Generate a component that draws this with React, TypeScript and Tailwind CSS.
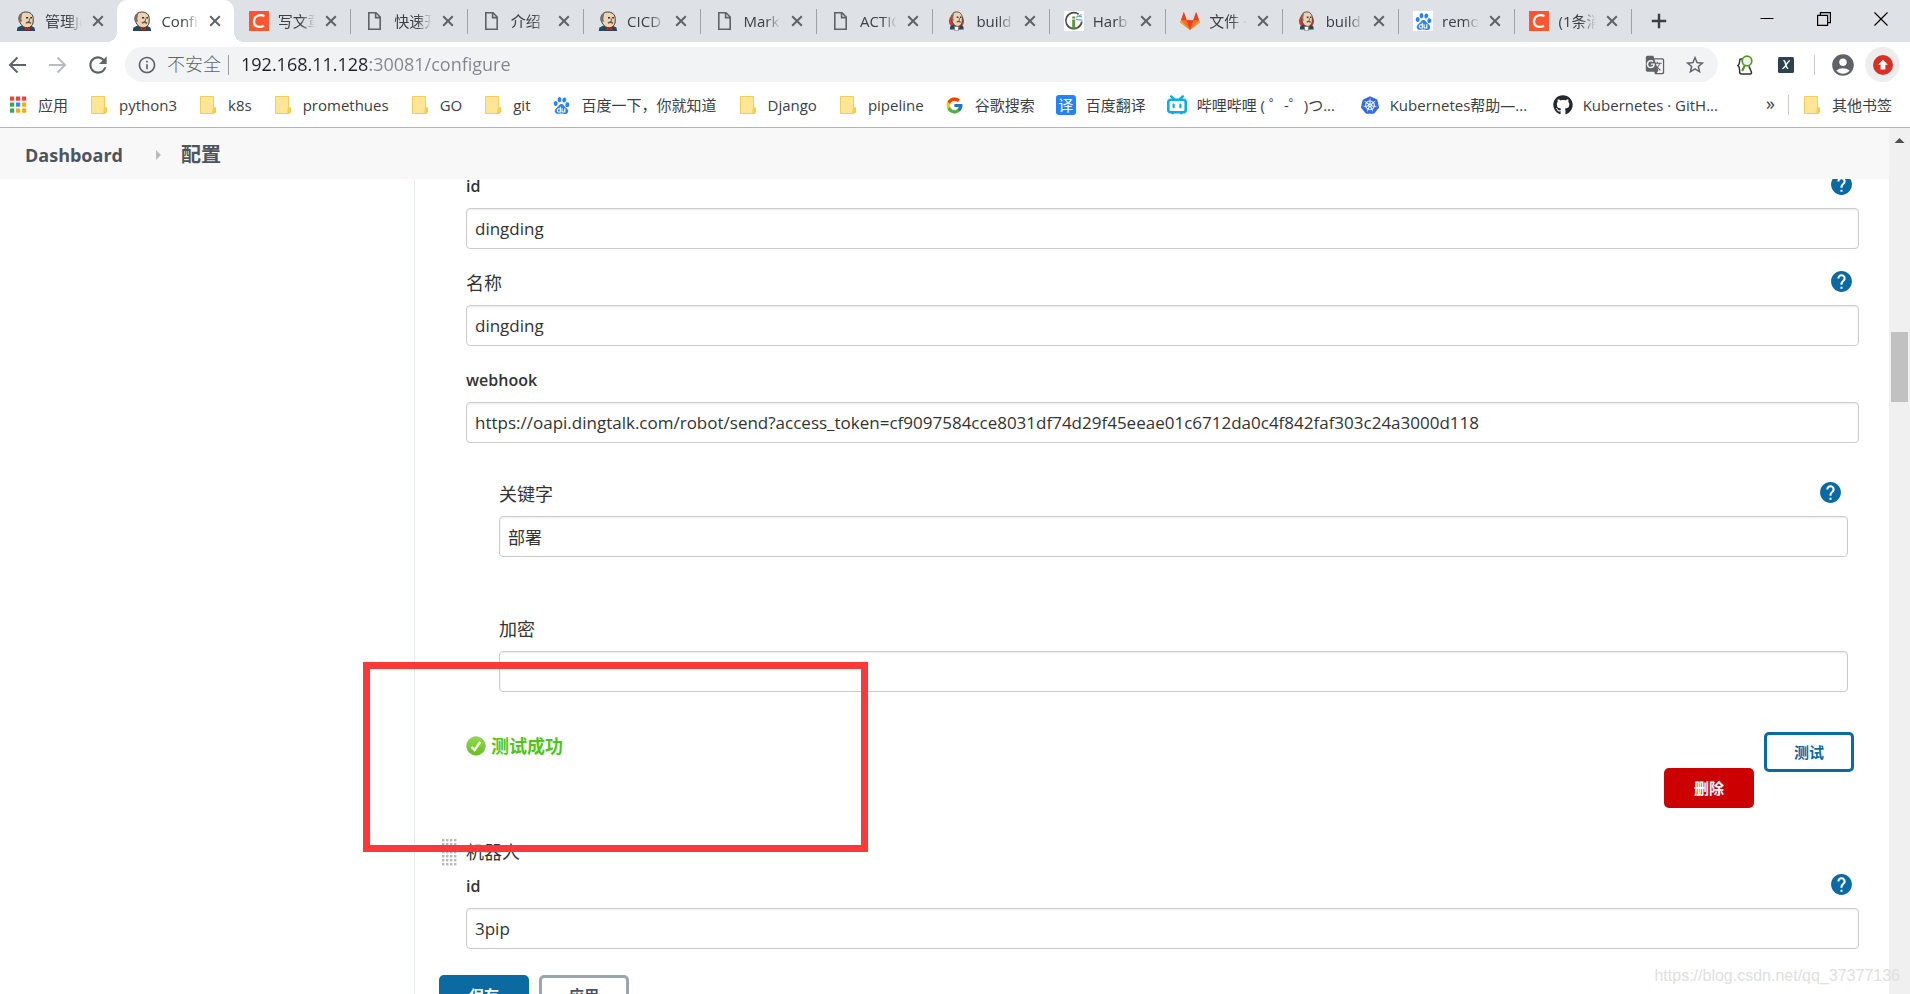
import type { ReactNode } from 'react';
import { FcGoogle } from 'react-icons/fc';
import { SiBaidu, SiKubernetes } from 'react-icons/si';
import { FaGithub } from 'react-icons/fa';
import { MdAccountCircle, MdGTranslate, MdHelp, MdInfoOutline, MdRefresh, MdStarBorder } from 'react-icons/md';

/* ---------- icons ---------- */

function Butler({ disc = false }: { disc?: boolean }) {
  return (
    <svg viewBox="0 0 20 20" className="size-5" aria-hidden="true">
      {disc && <circle cx="9.5" cy="10" r="7.6" fill="#d33833" />}
      <g transform={disc ? 'translate(2.2 0) scale(0.76 0.92)' : undefined}>
        <path d="M.8 20 1.4 16.6 5.6 14.6l4.600 2 4.600-1.800 3.600 1.800.8 3.400Z" fill="#1f4a60" />
        <path
          d="M3.4 10.400C1.800 6 4 1.200 9.400 1c5-.2 7.800 2.800 7.800 6.600 0 3.600.2 5.400-2.200 7.800-2 1.800-5.400 1.800-7.200.6-1.800-1.200-3.400-3.400-4.400-5.600Z"
          fill="#edd3b0"
          stroke="#3f3a36"
          strokeWidth="1"
        />
        <path d="M3.600 11C1.800 6.600 3.200 2.600 6.800 1.400 5.600 3.400 6 5.600 5.200 7.600L6 10.600Z" fill="#77706a" />
        <path d="M10 6.800h2.200M14.200 6.800h1.800" stroke="#333" strokeWidth="1.400" />
        <path d="M13.400 7.600v2.800l-1.200.2" stroke="#6b5a48" strokeWidth="1" fill="none" />
        <path d="M10 12.200c1.600-1.200 3.600-1 5 .2" stroke="#5c554e" strokeWidth="1.500" fill="none" />
        <path d="M8.400 16.200l3 1.300 3-1.300v3.600l-3-1.300-3 1.300Z" fill="#d52a22" stroke="#6e1410" strokeWidth=".4" />
      </g>
      {disc && <path d="M7.200 15.400h4.600l-.6 4.400H7.800Z" fill="#fff" stroke="#555" strokeWidth=".6" />}
    </svg>
  );
}

function CsdnIcon() {
  return (
    <svg viewBox="0 0 20 20" className="size-5" aria-hidden="true">
      <path d="M0 0h20v20H0z" fill="#fc5531" />
      <path d="M15.400 5.200C12 3 5.400 3.800 5 10.600c-.2 5.200 5.600 6.400 10 4.200" fill="none" stroke="#fff" strokeWidth="2.300" />
    </svg>
  );
}

function PageIcon() {
  return (
    <svg viewBox="0 0 20 20" className="size-5" fill="none" stroke="#5f6368" strokeWidth="1.600" aria-hidden="true">
      <path d="M3.800 1.800h7.200l4.200 4.200v12.200H3.800ZM10.600 2v4.600H15" />
    </svg>
  );
}

function HarborIcon() {
  return (
    <svg viewBox="0 0 20 20" className="size-5" fill="none" aria-hidden="true">
      <path d="M0 0h20v20H0z" fill="#fff" />
      <path d="M14.600 3.200A8 8 0 1 0 17.800 10.500" stroke="#4a4a4a" strokeWidth="1.700" />
      <path d="M8.200 8.400h3v8h-3zM6.600 16h6.400v1.400H6.600zM8.200 5.600h3v1.800h-3z" fill="#5a9a3c" />
      <path d="M12 6.600 17.600 3.400M12 8.400l6.400.8M13 5l5 .8" stroke="#6fa3cf" strokeWidth="1.200" />
    </svg>
  );
}

function GitlabIcon() {
  return (
    <svg viewBox="0 0 20 20" className="size-5" aria-hidden="true">
      <path d="M10 19 .2 11.500 3.800 1l3 8.200h6.400L16.200 1l3.600 10.500Z" fill="#fc6d26" />
      <path d="M10 19 6.600 9.200h6.800Z" fill="#e24329" />
      <path d="M3.800 1 6.800 9.200H1ZM16.200 1 13.200 9.200H19Z" fill="#e24329" />
      <path d="M1 9.200.2 11.500 10 19ZM19 9.200l.8 2.300L10 19Z" fill="#fca326" />
    </svg>
  );
}

function BaiduIcon({ framed = false }: { framed?: boolean }) {
  return (
    <span className={framed ? 'flex size-5 items-center justify-center bg-white' : 'flex size-5 items-center justify-center'}>
      <SiBaidu className="size-[17px] text-[#2a83fc]" />
    </span>
  );
}

function BilibiliIcon() {
  return (
    <svg viewBox="0 0 20 20" className="size-5" fill="none" stroke="#0aaee4" aria-hidden="true">
      <path d="M4.200 1.400 7 4M15.800 1.400 13 4" strokeWidth="2.400" strokeLinecap="round" />
      <rect x="1.300" y="4.700" width="17.400" height="12.600" rx="2.400" strokeWidth="2.600" />
      <path d="M6.600 9.600v2.600M13.400 9.600v2.600" strokeWidth="2.200" strokeLinecap="round" />
      <path d="M4.500 18.400h2.500M13 18.400h2.500" strokeWidth="1.600" />
    </svg>
  );
}

function FolderIcon() {
  return (
    <svg viewBox="0 0 20 20" className="size-5" aria-hidden="true">
      <path d="M2.500 1.500h13v11.200h2v3.800l-1.500 2H2.500Z" fill="#ffe694" stroke="#f2cf5b" />
      <path d="M15 18.300v-3.600c0-2 2.500-2 2.500 0v2.300c0 .9-1 1.300-2.500 1.300Z" fill="#fbd54e" stroke="#edc13c" strokeWidth=".8" />
    </svg>
  );
}

function AppsIcon() {
  const dots = ['#f44336', '#ea4335', '#f44336', '#34a853', '#2d8cff', '#fbab05', '#34a853', '#fbab05', '#fbab05'];
  return (
    <svg viewBox="0 0 20 20" className="size-5" aria-hidden="true">
      {dots.map((c, i) => (
        <rect key={i} x={2 + (i % 3) * 6} y={1.500 + Math.floor(i / 3) * 6} width="4.200" height="4.200" fill={c} />
      ))}
    </svg>
  );
}

function CloseIcon() {
  return (
    <svg viewBox="0 0 12 12" className="size-3" stroke="#5f6368" strokeWidth="2" aria-hidden="true">
      <path d="M1.200 1.200l9.600 9.600M10.800 1.200l-9.600 9.600" />
    </svg>
  );
}

/* ---------- browser chrome ---------- */

type Tab = { icon: ReactNode; title: string };

const tabs: Tab[] = [
  { icon: <Butler />, title: '管理Je' },
  { icon: <Butler />, title: 'Config' },
  { icon: <CsdnIcon />, title: '写文章' },
  { icon: <PageIcon />, title: '快速开' },
  { icon: <PageIcon />, title: '介绍 |' },
  { icon: <Butler />, title: 'CICD' },
  { icon: <PageIcon />, title: 'Mark' },
  { icon: <PageIcon />, title: 'ACTIO' },
  { icon: <Butler disc />, title: 'build' },
  { icon: <HarborIcon />, title: 'Harb' },
  { icon: <GitlabIcon />, title: '文件 ·' },
  { icon: <Butler disc />, title: 'build' },
  { icon: <BaiduIcon framed />, title: 'remo' },
  { icon: <CsdnIcon />, title: '(1条消' },
];

const ACTIVE_TAB = 1;

function TabStrip() {
  return (
    <div className="flex h-[42px] shrink-0 bg-[#dee1e6]">
      <div role="tablist" className="flex w-[1631px] pl-px">
        {tabs.map((tab, i) => {
          const active = i === ACTIVE_TAB;
          const divided = i > ACTIVE_TAB;
          return (
            <div
              key={i}
              className={
                active
                  ? 'relative flex min-w-0 flex-1 items-center rounded-t-[10px] bg-white pr-[13px] pl-[15px] before:absolute before:bottom-0 before:-left-[10px] before:size-[10px] before:bg-[radial-gradient(circle_at_0_0,transparent_10px,white_10px)] after:absolute after:-right-[10px] after:bottom-0 after:size-[10px] after:bg-[radial-gradient(circle_at_100%_0,transparent_10px,white_10px)]'
                  : 'relative flex min-w-0 flex-1 items-center pr-[13px] pl-[15px]'
              }
            >
              <button type="button" role="tab" aria-selected={active} className="flex min-w-0 flex-1 items-center gap-[9px]">
                <span className="shrink-0">{tab.icon}</span>
                <span className="min-w-0 flex-1 overflow-hidden text-left text-[15px] leading-5 whitespace-nowrap text-[#3c4043] [mask-image:linear-gradient(to_right,black_60%,transparent)]">
                  {tab.title}
                </span>
              </button>
              <button type="button" aria-label="关闭" className="ml-2.5 shrink-0">
                <CloseIcon />
              </button>
              {divided && <span className="absolute top-[9px] -right-px h-[25px] w-px bg-[#a0a3a8]" />}
            </div>
          );
        })}
      </div>
      <button type="button" aria-label="新标签页" className="ml-5 flex items-center">
        <svg viewBox="0 0 16 16" className="size-4" stroke="#3c4043" strokeWidth="2.400" aria-hidden="true">
          <path d="M8 .8v14.400M.8 8h14.400" />
        </svg>
      </button>
      <div className="ml-auto flex h-[37px] items-center gap-[43px] pr-[22px]">
        <button type="button" aria-label="最小化">
          <svg viewBox="0 0 14 14" className="size-3.5" stroke="#000" aria-hidden="true">
            <path d="M.5 6.500h13" />
          </svg>
        </button>
        <button type="button" aria-label="还原">
          <svg viewBox="0 0 14 14" className="size-3.5" fill="none" stroke="#000" strokeWidth="1.200" aria-hidden="true">
            <path d="M.6 3.400h10v10h-10zM3.400 3.400V.6h10v10h-2.800" />
          </svg>
        </button>
        <button type="button" aria-label="关闭窗口">
          <svg viewBox="0 0 14 14" className="size-3.5" stroke="#000" strokeWidth="1.200" aria-hidden="true">
            <path d="M.5.5l13 13M13.500.5l-13 13" />
          </svg>
        </button>
      </div>
    </div>
  );
}

function Toolbar() {
  return (
    <div className="flex h-[45px] shrink-0 items-center bg-white pr-2.5 pl-[7px]">
      <button type="button" aria-label="后退">
        <svg viewBox="0 0 20 20" className="size-5" fill="none" stroke="#5f6368" strokeWidth="2" aria-hidden="true">
          <path d="M19 10H3M10.500 2.500 3 10l7.500 7.500" />
        </svg>
      </button>
      <button type="button" aria-label="前进" className="ml-5">
        <svg viewBox="0 0 20 20" className="size-5" fill="none" stroke="#babcbe" strokeWidth="2" aria-hidden="true">
          <path d="M2 10h16M10.500 2.500 18 10l-7.500 7.500" />
        </svg>
      </button>
      <button type="button" aria-label="重新加载" className="ml-[18px]">
        <MdRefresh className="size-[26px] text-[#5f6368]" />
      </button>
      <div className="ml-[14px] flex h-[35px] flex-1 items-center rounded-full bg-[#f1f3f4] pr-3 pl-3">
        <MdInfoOutline className="size-5 shrink-0 text-[#5f6368]" />
        <label htmlFor="address" className="ml-[10px] text-[18px] font-light text-[#5f6368]">
          不安全
        </label>
        <span className="mr-3 ml-[7px] h-5 w-px bg-[#9aa0a6]" />
        <input
          id="address"
          className="min-w-0 flex-1 bg-[linear-gradient(to_right,#202124_129px,#80868b_129px)] bg-clip-text text-[18px] text-transparent outline-none"
          defaultValue="192.168.11.128:30081/configure"
        />
        <button type="button" aria-label="翻译">
          <MdGTranslate className="size-5 text-[#5f6368]" />
        </button>
        <button type="button" aria-label="收藏" className="ml-[19px]">
          <MdStarBorder className="size-[22px] text-[#5f6368]" />
        </button>
      </div>
      <button type="button" aria-label="查看器" className="ml-[19px]">
        <svg viewBox="0 0 18 20" className="h-5 w-[18px]" fill="none" aria-hidden="true">
          <path d="M5 4H3.800C2.600 4 2.600 5 2.600 6.500S2.600 9.500 1 10.500c1.600 1 1.600 2.500 1.600 4.500v1.800c0 1.500.6 2.200 1.900 2.200h8.300c2 0 2-1 1.200-3l-2-4.600" stroke="#333" strokeWidth="1.500" />
          <circle cx="10" cy="6" r="4.800" fill="#e9f3f3" stroke="#5c9422" strokeWidth="1.700" />
          <path d="M7.600 10.600 5.200 16" stroke="#5c9422" strokeWidth="2.200" />
        </svg>
      </button>
      <button type="button" aria-label="扩展程序" className="ml-[23px]">
        <svg viewBox="0 0 16 16" className="size-4" aria-hidden="true">
          <rect width="16" height="16" rx="1.500" fill="#2c434d" />
          <path d="M5.400 3.800c1.200-.4 1.400.6 2.200 3.400s1.200 4.400 2.600 4.200M11.800 3.800c-2 0-5.200 7.800-7.400 7.800" stroke="#fff" strokeWidth="1.400" fill="none" />
        </svg>
      </button>
      <span className="mr-[15px] ml-5 h-5 w-px bg-[#c8cbcf]" />
      <button type="button" aria-label="用户">
        <MdAccountCircle className="size-[26px] text-[#5f6368]" />
      </button>
      <button type="button" aria-label="更新" className="ml-[9px] flex size-[35px] items-center justify-center rounded-full bg-[#ededee]">
        <svg viewBox="0 0 20 20" className="size-5" aria-hidden="true">
          <circle cx="10" cy="10" r="10" fill="#d93025" />
          <path d="M10 4.800 5.200 9.800h2.400v4.600h4.800V9.800h2.400Z" fill="#fff" />
        </svg>
      </button>
    </div>
  );
}

type Bookmark = { icon: ReactNode; label: string; shortened?: boolean };

const bookmarks: Bookmark[] = [
  { icon: <AppsIcon />, label: '应用' },
  { icon: <FolderIcon />, label: 'python3' },
  { icon: <FolderIcon />, label: 'k8s' },
  { icon: <FolderIcon />, label: 'promethues' },
  { icon: <FolderIcon />, label: 'GO' },
  { icon: <FolderIcon />, label: 'git' },
  { icon: <BaiduIcon />, label: '百度一下，你就知道' },
  { icon: <FolderIcon />, label: 'Django' },
  { icon: <FolderIcon />, label: 'pipeline' },
  { icon: <FcGoogle className="size-[19px]" />, label: '谷歌搜索' },
  {
    icon: <span className="flex size-5 items-center justify-center rounded-[3px] bg-[#2483fa] text-[15px] text-white">译</span>,
    label: '百度翻译',
  },
  { icon: <BilibiliIcon />, label: '哔哩哔哩 ( ゜-゜)つ...', shortened: true },
  { icon: <SiKubernetes className="size-[18px] text-[#326ce5]" />, label: 'Kubernetes帮助—...', shortened: true },
  { icon: <FaGithub className="size-5 text-[#24292e]" />, label: 'Kubernetes · GitH...', shortened: true },
];

function BookmarkLink({ icon, label, shortened = false }: Bookmark) {
  return (
    <a href="#" className="flex shrink-0 items-center gap-2.5 whitespace-nowrap">
      <span className="flex size-5 shrink-0 items-center justify-center">{icon}</span>
      <span className={shortened ? 'w-[142px]' : undefined}>{label}</span>
    </a>
  );
}

function BookmarkBar() {
  return (
    <nav className="flex h-[41px] shrink-0 items-center gap-[21px] border-b border-[#b6b4b0] bg-white pr-[18px] pb-1 pl-2 text-[15px] text-[#3c4043]">
      {bookmarks.map((b) => (
        <BookmarkLink key={b.label} {...b} />
      ))}
      <div className="ml-auto flex items-center gap-[13px]">
        <button type="button" aria-label="更多书签" className="pb-1 text-[18px] leading-none">
          »
        </button>
        <span className="h-5 w-px bg-[#c8cbcf]" />
        <BookmarkLink icon={<FolderIcon />} label="其他书签" />
      </div>
    </nav>
  );
}

/* ---------- page ---------- */

type FieldProps = { id: string; label: string; value: string; help?: boolean; latin?: boolean };

function Field({ id, label, value, help = false, latin = false }: FieldProps) {
  return (
    <div>
      <div className="mb-2.5 flex h-6 items-center justify-between pr-[5px]">
        <label htmlFor={id} className={latin ? 'text-[16px] leading-6 font-semibold' : 'text-[18px] leading-6'}>
          {label}
        </label>
        {help && (
          <button type="button" aria-label={`帮助: ${label}`} className="pb-[3px]">
            <MdHelp className="size-[25px] text-[#0b6aa2]" />
          </button>
        )}
      </div>
      <input
        id={id}
        type="text"
        defaultValue={value}
        className="block h-[41px] w-full rounded-[4px] border border-[#ccc] bg-white px-2 text-[17px] shadow-[inset_0_1px_2px_rgba(0,0,0,0.08)] outline-none"
      />
    </div>
  );
}

function SuccessIcon() {
  return (
    <svg viewBox="0 0 20 20" className="size-5" aria-hidden="true">
      <defs>
        <linearGradient id="ok" x1="0" y1="0" x2="0" y2="1">
          <stop offset="0" stopColor="#8fdc4e" />
          <stop offset="1" stopColor="#5fc316" />
        </linearGradient>
      </defs>
      <circle cx="10" cy="10" r="9.300" fill="url(#ok)" stroke="#8fae6e" strokeWidth=".7" />
      <path d="M5.400 10.800 8.600 14l5.600-8" fill="none" stroke="#fff" strokeWidth="2.400" />
    </svg>
  );
}

function DragHandle() {
  return (
    <svg viewBox="0 0 15 27" className="h-[27px] w-[15px]" fill="#b8b8b8" aria-hidden="true">
      {Array.from({ length: 28 }, (_, i) => (
        <rect key={i} x={(i % 4) * 4} y={Math.floor(i / 4) * 4} width="2.400" height="2.400" />
      ))}
    </svg>
  );
}

function ConfigForm() {
  return (
    <form className="-mt-[5px] flex-1 pr-[30px] pl-[51px]">
      <div className="flex flex-col gap-[22px]">
        <Field id="robot-id" label="id" value="dingding" help latin />
        <Field id="robot-name" label="名称" value="dingding" help />
        <Field
          id="robot-webhook"
          label="webhook"
          value="https://oapi.dingtalk.com/robot/send?access_token=cf9097584cce8031df74d29f45eeae01c6712da0c4f842faf303c24a3000d118"
          latin
        />
      </div>
      <div className="mt-[39px] flex flex-col gap-[60px] pr-[11px] pl-[33px]">
        <Field id="robot-keyword" label="关键字" value="部署" help />
        <Field id="robot-secret" label="加密" value="" />
      </div>
      <div className="mt-10 flex items-start pr-[5px]">
        <p className="mt-1 flex items-center gap-[5px] text-[18px] leading-5 font-bold text-[#52c41a]">
          <SuccessIcon />
          测试成功
        </p>
        <button type="button" className="mt-9 ml-auto h-10 w-[90px] rounded-[5px] bg-[#c00] text-[15px] font-bold text-white">
          删除
        </button>
        <button type="button" className="ml-2.5 h-10 w-[90px] rounded-[5px] border-3 border-[#0b6aa2] bg-white text-[15px] font-bold text-[#0b6aa2]">
          测试
        </button>
      </div>
      <div className="mt-[31px] -ml-6 flex h-[27px] items-center gap-[9px] text-[18px]">
        <DragHandle />
        机器人
      </div>
      <div className="mt-2">
        <Field id="robot2-id" label="id" value="3pip" help latin />
      </div>
      <div className="mt-[26px] -ml-[27px] flex gap-2.5 pb-4">
        <button type="submit" className="h-10 w-[90px] rounded-[5px] bg-[#0b6aa2] text-[15px] font-bold text-white">
          保存
        </button>
        <button type="button" className="h-10 w-[90px] rounded-[5px] border-3 border-[#9aa5ae] bg-white text-[15px] font-bold text-[#4d545d]">
          应用
        </button>
      </div>
    </form>
  );
}

function Scrollbar() {
  return (
    <div className="flex w-[21px] shrink-0 flex-col items-center bg-[#f0f0f0]" aria-hidden="true">
      <svg viewBox="0 0 21 21" className="h-[21px] w-[21px]" fill="#505050">
        <path d="M5.500 15h10l-5-5Z" />
      </svg>
      <div className="mt-[183px] h-[70px] w-[17px] bg-[#c1c1c1]" />
    </div>
  );
}

export default function App() {
  return (
    <div className="relative flex h-screen flex-col overflow-hidden bg-white font-['Open_Sans','Noto_Sans_CJK_SC',sans-serif] text-[#333]">
      <TabStrip />
      <Toolbar />
      <BookmarkBar />
      <div className="flex min-h-0 flex-1">
        <div className="flex min-w-0 flex-1 flex-col">
          <nav className="flex h-[51px] shrink-0 items-center bg-[#f8f8f8] px-[25px] pt-[3px] text-[18px] font-bold text-[#4d545d]">
            <a href="#">Dashboard</a>
            <svg viewBox="0 0 5 10" className="mr-5 ml-[33px] h-2.5 w-[5px]" fill="#bbb" aria-hidden="true">
              <path d="M0 0l5 5-5 5Z" />
            </svg>
            <a href="#" className="text-[20px]">
              配置
            </a>
          </nav>
          <main className="flex min-h-0 flex-1 overflow-hidden">
            <aside className="w-[415px] shrink-0 border-r border-[#e6eeee]" />
            <ConfigForm />
          </main>
        </div>
        <Scrollbar />
      </div>
      <div className="pointer-events-none absolute top-[662px] left-[363px] h-[190px] w-[505px] border-7 border-[#fc3838]" />
      <p className="pointer-events-none absolute right-2.5 bottom-1.5 font-['Liberation_Sans',sans-serif] text-[16px] leading-6 text-[#e0e0e0]">
        https://blog.csdn.net/qq_37377136
      </p>
    </div>
  );
}
